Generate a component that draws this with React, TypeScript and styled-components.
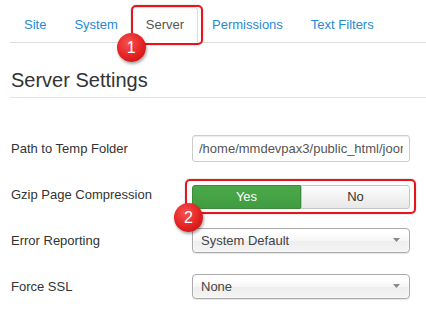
import React, { ReactElement } from 'react'
import styled, { createGlobalStyle } from 'styled-components'

const GlobalStyle = createGlobalStyle`
  body {
    margin: 0;
    background: #fff;
    font-family: 'Liberation Sans', Arial, sans-serif;
    font-size: 13px;
    color: #333;
  }
`

const TABS = ['Site', 'System', 'Server', 'Permissions', 'Text Filters']

const Arrow = (): ReactElement => (
  <svg width="7" height="4" viewBox="0 0 7 4">
    <path d="M0 0 L7 0 L3.5 4 Z" fill="#888" />
  </svg>
)

type Field = {
  label: string
  kind: 'input' | 'toggle' | 'select'
  value?: string
}

const FIELDS: Field[] = [
  { label: 'Path to Temp Folder', kind: 'input', value: '/home/mmdevpax3/public_html/joomla/tmp' },
  { label: 'Gzip Page Compression', kind: 'toggle' },
  { label: 'Error Reporting', kind: 'select', value: 'System Default' },
  { label: 'Force SSL', kind: 'select', value: 'None' },
]

const App = (): ReactElement => {
  const renderControl = (f: Field) => {
    if (f.kind === 'input') {
      return <TextInput readOnly value={f.value} />
    }
    if (f.kind === 'toggle') {
      return (
        <Toggle>
          <ToggleButton active>Yes</ToggleButton>
          <ToggleButton>No</ToggleButton>
          <Highlight style={{ left: -7, right: -6, top: -6, bottom: -5 }} />
          <Badge style={{ left: -18, top: 18 }}>2</Badge>
        </Toggle>
      )
    }
    return (
      <Select>
        <span>{f.value}</span>
        <Arrow />
      </Select>
    )
  }

  return (
    <Page>
      <GlobalStyle />
      <TabBar>
        {TABS.map((t) => (
          <Tab key={t} active={t === 'Server'}>
            {t}
            {t === 'Server' && (
              <>
                <Highlight style={{ left: -2, right: -6, top: -3, bottom: -3 }} />
                <Badge style={{ left: -16, top: 25 }}>1</Badge>
              </>
            )}
          </Tab>
        ))}
      </TabBar>
      <Heading>Server Settings</Heading>
      <Form>
        {FIELDS.map((f) => (
          <React.Fragment key={f.label}>
            <Label>{f.label}</Label>
            {renderControl(f)}
          </React.Fragment>
        ))}
      </Form>
    </Page>
  )
}

export default App

const Page = styled.div`
  width: 426px;
  height: 312px;
  overflow: hidden;
`

const TabBar = styled.div`
  display: flex;
  margin-left: 10px;
  padding-top: 7px;
  border-bottom: 1px solid #ddd;
`

type TabProps = {
  active?: boolean
}

const Tab = styled.div<TabProps>`
  position: relative;
  padding: 8px 13px;
  line-height: 18px;
  margin-bottom: -1px;
  font-size: 13px;
  border: 1px solid ${(p) => (p.active ? '#ddd' : 'transparent')};
  border-bottom-color: ${(p) => (p.active ? '#fff' : 'transparent')};
  border-radius: 4px 4px 0 0;
  background: ${(p) => (p.active ? '#fff' : 'transparent')};
  color: ${(p) => (p.active ? '#555' : '#1f8ad6')};
`

const Highlight = styled.div`
  position: absolute;
  border: 2px solid #e8141b;
  border-radius: 5px;
  box-shadow: 0 0 2px rgba(0, 0, 0, 0.25);
  pointer-events: none;
`

const Badge = styled.div`
  position: absolute;
  width: 29px;
  height: 29px;
  border-radius: 50%;
  background: radial-gradient(circle at 40% 35%, #f65252 0%, #e42222 55%, #b80e0e 100%);
  box-shadow: 1px 2px 3px rgba(0, 0, 0, 0.35);
  color: #fff;
  font-size: 16px;
  line-height: 29px;
  text-align: center;
  z-index: 2;
`

const Heading = styled.h2`
  margin: 25px 0 0 10px;
  padding: 0 0 5px 1px;
  font-size: 20px;
  line-height: 24px;
  font-weight: normal;
  color: #333;
  border-bottom: 1px solid #e5e5e5;
`

const Form = styled.div`
  display: grid;
  grid-template-columns: 181px 218px;
  grid-auto-rows: 46px;
  align-items: center;
  margin-top: 27px;
  padding-left: 11px;
`

const Label = styled.div`
  font-size: 13px;
  color: #333;
`

const TextInput = styled.input`
  box-sizing: border-box;
  width: 218px;
  height: 27px;
  padding: 0 6px;
  border: 1px solid #ccc;
  border-radius: 3px;
  box-shadow: inset 0 1px 1px rgba(0, 0, 0, 0.075);
  font-family: inherit;
  font-size: 13px;
  color: #555;
  outline: none;
`

const Toggle = styled.div`
  position: relative;
  display: flex;
  width: 218px;
  height: 24px;
  margin-top: 5px;
`

type ToggleButtonProps = {
  active?: boolean
}

const ToggleButton = styled.div<ToggleButtonProps>`
  flex: 1;
  display: flex;
  align-items: center;
  justify-content: center;
  font-size: 13px;
  border: 1px solid ${(p) => (p.active ? '#3b8b3b' : '#c5c5c5')};
  border-radius: ${(p) => (p.active ? '3px 0 0 3px' : '0 3px 3px 0')};
  background: ${(p) =>
    p.active ? 'linear-gradient(#4aa84a, #419d41)' : 'linear-gradient(#fdfdfd, #e8e8e8)'};
  color: ${(p) => (p.active ? '#fff' : '#333')};
`

const Select = styled.div`
  box-sizing: border-box;
  display: flex;
  align-items: center;
  justify-content: space-between;
  width: 218px;
  height: 25px;
  padding: 0 9px 0 8px;
  border: 1px solid #aaa;
  border-radius: 4px;
  background: linear-gradient(#fff 20%, #f6f6f6 50%, #eee 52%, #f4f4f4 100%);
  box-shadow: inset 0 0 3px #fff, 0 1px 1px rgba(0, 0, 0, 0.1);
  font-size: 13px;
  color: #444;
`
